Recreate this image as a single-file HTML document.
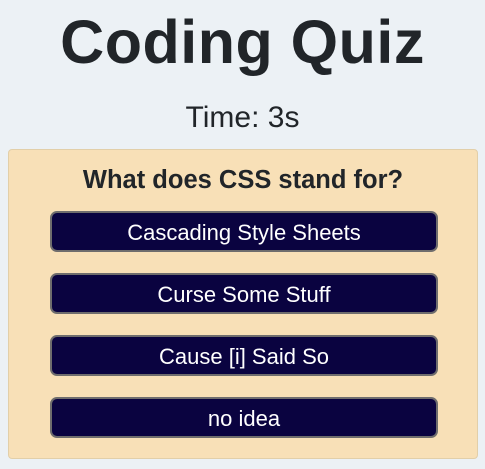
<!DOCTYPE html>
<html><head><style>
body{margin:0;width:485px;height:469px;background:#ecf1f5;font-family:"Liberation Sans",sans-serif;color:#212529;position:relative;overflow:hidden}
h1{position:absolute;top:2px;left:0;width:485px;margin:0;text-align:center;font-size:61px;font-weight:bold;line-height:80px;letter-spacing:0.5px}
.time{position:absolute;top:101px;left:0;width:485px;text-align:center;font-size:30px;line-height:34px}
.card{position:absolute;left:8px;top:149px;width:468px;height:308px;background:#f8e0b7;border:1px solid #e2cfa9;border-radius:4px}
.q{position:absolute;top:15px;left:0;width:100%;text-align:center;font-size:25.5px;font-weight:bold;line-height:30px}
.b{position:absolute;left:41px;width:384px;height:37px;background:#0a0340;border:2px solid #6f6d6d;border-radius:7px;color:#fff;text-align:center;font-size:22px;line-height:39px}
</style></head><body>
<h1>Coding Quiz</h1>
<div class="time">Time: 3s</div>
<div class="card">
<div class="q">What does CSS stand for?</div>
<div class="b" style="top:61px">Cascading Style Sheets</div>
<div class="b" style="top:123px">Curse Some Stuff</div>
<div class="b" style="top:185px">Cause [i] Said So</div>
<div class="b" style="top:247px">no idea</div>
</div>
</body></html>
